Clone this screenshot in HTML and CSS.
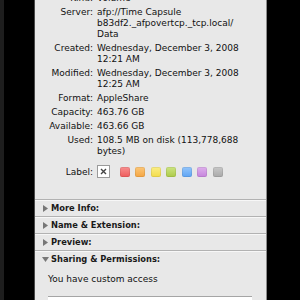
FILE: index.html
```html
<!DOCTYPE html>
<html lang="en">
<head>
    <meta charset="UTF-8">
    <title>Volume Info</title>
    <link rel="stylesheet" href="styles.css">
</head>
<body>
    <div class="screen">
        <div class="edge"></div>
        <div class="window">
            <dl class="info">
                <dt>Kind:</dt><dd>Volume</dd>
                <dt>Server:</dt><dd>afp://Time Capsule<br>b83df2._afpovertcp._tcp.local/<br>Data</dd>
                <dt>Created:</dt><dd>Wednesday, December 3, 2008<br>12:21 AM</dd>
                <dt>Modified:</dt><dd>Wednesday, December 3, 2008<br>12:25 AM</dd>
                <dt>Format:</dt><dd>AppleShare</dd>
                <dt>Capacity:</dt><dd>463.76 GB</dd>
                <dt>Available:</dt><dd>463.66 GB</dd>
                <dt>Used:</dt><dd>108.5 MB on disk (113,778,688<br>bytes)</dd>
            </dl>
            <div class="label-row">
                <span class="label-name">Label:</span>
                <div class="swatches">
                    <span class="no-label">
                        <svg width="7" height="7" viewBox="0 0 7 7"><path d="M1 1L6 6M6 1L1 6" stroke="#444" stroke-width="1.4"/></svg>
                    </span>
                    <span class="swatch red"></span>
                    <span class="swatch orange"></span>
                    <span class="swatch yellow"></span>
                    <span class="swatch green"></span>
                    <span class="swatch blue"></span>
                    <span class="swatch purple"></span>
                    <span class="swatch gray"></span>
                </div>
            </div>
            <div class="sections">
                <div class="section">
                    <svg class="arrow" width="5" height="7" viewBox="0 0 5 7"><path d="M0 0L5 3.5L0 7Z" fill="#777"/></svg>
                    More Info:
                </div>
                <div class="section">
                    <svg class="arrow" width="5" height="7" viewBox="0 0 5 7"><path d="M0 0L5 3.5L0 7Z" fill="#777"/></svg>
                    Name &amp; Extension:
                </div>
                <div class="section">
                    <svg class="arrow" width="5" height="7" viewBox="0 0 5 7"><path d="M0 0L5 3.5L0 7Z" fill="#777"/></svg>
                    Preview:
                </div>
                <div class="section open">
                    <svg class="arrow" width="7" height="5" viewBox="0 0 7 5"><path d="M0 0L7 0L3.5 5Z" fill="#777"/></svg>
                    Sharing &amp; Permissions:
                </div>
            </div>
            <p class="access">You have custom access</p>
            <div class="perm-table"></div>
        </div>
    </div>
</body>
</html>
```

FILE: styles.css
```css
body {
    margin: 0;
    background-color: #000;
    font-family: "DejaVu Sans", sans-serif;
    font-size: 9px;
    color: #111;
}
.screen {
    display: flex;
    height: 300px;
    overflow: hidden;
}
.edge {
    width: 4px;
    background-color: #1e1e1e;
}
.window {
    margin-left: 30px;
    width: 231px;
    background-color: #e8e8e8;
    border-left: 1px solid #4a4a4a;
    border-right: 1px solid #8c8c8c;
}
.info {
    display: grid;
    grid-template-columns: 58px 1fr;
    column-gap: 4px;
    row-gap: 3px;
    line-height: 11px;
    margin: -7px 0 0 0;
}
.info dt {
    text-align: right;
    white-space: nowrap;
}
.info dd {
    margin: 0;
    white-space: nowrap;
}
.label-row {
    display: grid;
    grid-template-columns: 58px 1fr;
    column-gap: 4px;
    align-items: center;
    margin-top: 8px;
    height: 13px;
}
.label-name {
    text-align: right;
}
.swatches {
    display: flex;
    align-items: center;
    gap: 5.5px;
}
.no-label {
    display: flex;
    align-items: center;
    justify-content: center;
    width: 11px;
    height: 11px;
    background-color: #fff;
    border: 1px solid #9a9a9a;
    margin-right: 4px;
}
.swatch {
    width: 10px;
    height: 10px;
    border-radius: 2px;
    box-shadow: inset 0 0 0 1px rgba(0, 0, 0, 0.08);
}
.red { background: linear-gradient(#f89090, #ee5b5b); }
.orange { background: linear-gradient(#fcc779, #f5a542); }
.yellow { background: linear-gradient(#fbee86, #f3dc4a); }
.green { background: linear-gradient(#cde582, #acca48); }
.blue { background: linear-gradient(#95c6fb, #5ea4f4); }
.purple { background: linear-gradient(#deb0ec, #c584dc); }
.gray { background: linear-gradient(#c8c8c8, #a9a9a9); }
.sections {
    margin-top: 21px;
}
.section {
    display: flex;
    align-items: center;
    gap: 3px;
    height: 16px;
    padding-left: 8px;
    border-top: 1px solid #b2b2b2;
    box-shadow: inset 0 1px 0 #f7f7f7;
    font-weight: bold;
    font-size: 8.3px;
    color: #1a1a1a;
}
.section.open {
    padding-left: 7px;
    gap: 2px;
}
.access {
    margin: 7px 0 0 13px;
    line-height: 11px;
}
.perm-table {
    margin: 11px 0 0 13px;
    width: 204px;
    height: 30px;
    background-color: #fff;
    border-top: 1px solid #a5a5a5;
}
```
